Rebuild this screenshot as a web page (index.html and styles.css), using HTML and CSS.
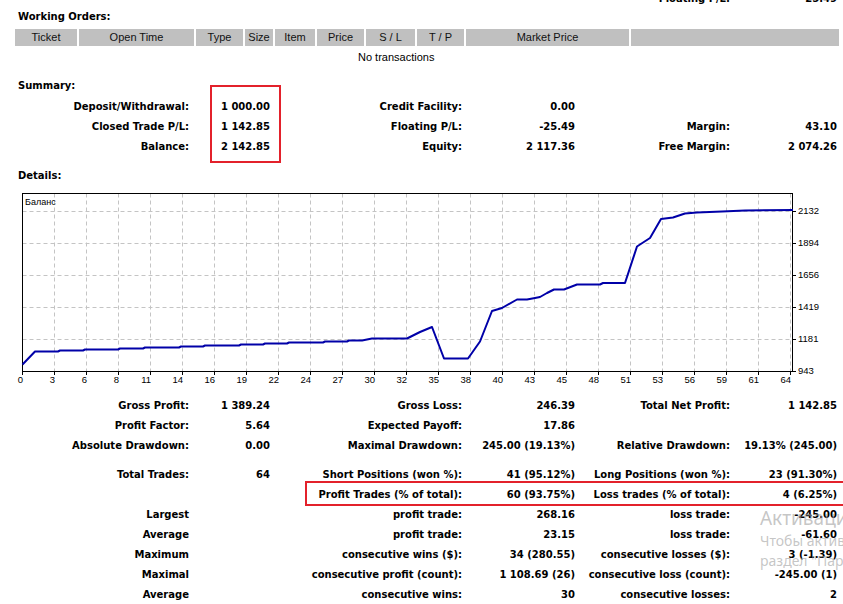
FILE: index.html
```html
<!DOCTYPE html>
<html>
<head>
<meta charset="utf-8">
<link rel="stylesheet" href="styles.css">
</head>
<body>
<div class="page">
  <div class="grid6 cut-row">
    <span class="c5">Floating P/L:</span><span>-25.49</span>
  </div>

  <div class="heading wo">Working Orders:</div>
  <div class="orders-head">
    <span>Ticket</span><span>Open Time</span><span>Type</span><span>Size</span><span>Item</span><span>Price</span><span>S / L</span><span>T / P</span><span>Market Price</span><span></span>
  </div>
  <div class="no-trans">No transactions</div>

  <div class="heading sum">Summary:</div>
  <div class="grid6 summary">
    <span>Deposit/Withdrawal:</span><span>1 000.00</span><span>Credit Facility:</span><span>0.00</span><span></span><span></span>
    <span>Closed Trade P/L:</span><span>1 142.85</span><span>Floating P/L:</span><span>-25.49</span><span>Margin:</span><span>43.10</span>
    <span>Balance:</span><span>2 142.85</span><span>Equity:</span><span>2 117.36</span><span>Free Margin:</span><span>2 074.26</span>
    <div class="mark mark-sum"></div>
  </div>

  <div class="heading det">Details:</div>
  <svg class="chart" width="843" height="209" viewBox="0 186 843 209" xmlns="http://www.w3.org/2000/svg">
    <rect x="22.5" y="193.5" width="770" height="178" fill="#fff" stroke="none"/>
    <path d="M22.5 211.5H792.5M22.5 243.5H792.5M22.5 275.5H792.5M22.5 307.5H792.5M22.5 339.5H792.5" stroke="#c4c4c4" stroke-width="1" stroke-dasharray="4 3" fill="none"/>
    <path d="M54.5 193.5V371.5M86.5 193.5V371.5M118.5 193.5V371.5M150.5 193.5V371.5M182.5 193.5V371.5M214.5 193.5V371.5M246.5 193.5V371.5M278.5 193.5V371.5M310.5 193.5V371.5M342.5 193.5V371.5M374.5 193.5V371.5M406.5 193.5V371.5M438.5 193.5V371.5M470.5 193.5V371.5M502.5 193.5V371.5M534.5 193.5V371.5M566.5 193.5V371.5M598.5 193.5V371.5M630.5 193.5V371.5M662.5 193.5V371.5M694.5 193.5V371.5M726.5 193.5V371.5M758.5 193.5V371.5M790.5 193.5V371.5" stroke="#c4c4c4" stroke-width="1" stroke-dasharray="4 3" fill="none"/>
    <rect x="22.5" y="193.5" width="770" height="178" fill="none" stroke="#000" stroke-width="1"/>
    <path d="M792.5 211.5H796M792.5 243.5H796M792.5 275.5H796M792.5 307.5H796M792.5 339.5H796M792.5 371.5H796" stroke="#000" stroke-width="1"/>
    <path d="M22.5 371.5V375M54.5 371.5V375M86.5 371.5V375M118.5 371.5V375M150.5 371.5V375M182.5 371.5V375M214.5 371.5V375M246.5 371.5V375M278.5 371.5V375M310.5 371.5V375M342.5 371.5V375M374.5 371.5V375M406.5 371.5V375M438.5 371.5V375M470.5 371.5V375M502.5 371.5V375M534.5 371.5V375M566.5 371.5V375M598.5 371.5V375M630.5 371.5V375M662.5 371.5V375M694.5 371.5V375M726.5 371.5V375M758.5 371.5V375M790.5 371.5V375" stroke="#000" stroke-width="1"/>
    <polyline fill="none" stroke="#0000a8" stroke-width="2" stroke-linejoin="round" points="22.5,364.5 35,351.5 58,351.5 60,350.5 83,350.5 85,349.5 118,349.5 120,348.5 143,348.5 145,347.5 179,347.5 181,346.5 203,346.5 205,345.5 239,345.5 241,344.5 263,344.5 265,343.5 287,343.5 289,342.5 323,342.5 325,341.5 347,341.5 349,340.5 362,340.5 372,338.5 407,338.5 420,332 432,327 444,358.5 468,358.5 480,341.5 492,311 502,308 517,299.5 527,299.5 535,298 540,297 547,293 554,289.5 564,289.5 577,284.5 600,284.5 603,283 625,283 637,246.5 640,244.5 650,238 661,219 673,217.5 685,213.5 697,212.5 722,211.5 745,210.5 793,210"/>
    <text class="cap" x="25" y="205">Баланс</text>
    <g class="ylab">
      <text x="798" y="214">2132</text>
      <text x="798" y="246">1894</text>
      <text x="798" y="278">1656</text>
      <text x="798" y="310">1419</text>
      <text x="798" y="342">1181</text>
      <text x="798" y="374">943</text>
    </g>
    <g class="xlab">
      <text x="23" y="383" text-anchor="start">0</text>
      <text x="55" y="383">3</text>
      <text x="87" y="383">6</text>
      <text x="119" y="383">8</text>
      <text x="151" y="383">11</text>
      <text x="183" y="383">14</text>
      <text x="215" y="383">16</text>
      <text x="247" y="383">19</text>
      <text x="279" y="383">22</text>
      <text x="311" y="383">24</text>
      <text x="343" y="383">27</text>
      <text x="375" y="383">30</text>
      <text x="407" y="383">32</text>
      <text x="439" y="383">35</text>
      <text x="471" y="383">38</text>
      <text x="503" y="383">40</text>
      <text x="535" y="383">43</text>
      <text x="567" y="383">45</text>
      <text x="599" y="383">48</text>
      <text x="631" y="383">51</text>
      <text x="663" y="383">53</text>
      <text x="695" y="383">56</text>
      <text x="727" y="383">59</text>
      <text x="759" y="383">61</text>
      <text x="791" y="383">64</text>
    </g>
  </svg>

  <div class="grid6 stats-a">
    <span>Gross Profit:</span><span>1 389.24</span><span>Gross Loss:</span><span>246.39</span><span>Total Net Profit:</span><span>1 142.85</span>
    <span>Profit Factor:</span><span>5.64</span><span>Expected Payoff:</span><span>17.86</span><span></span><span></span>
    <span>Absolute Drawdown:</span><span>0.00</span><span>Maximal Drawdown:</span><span>245.00 (19.13%)</span><span>Relative Drawdown:</span><span>19.13% (245.00)</span>
  </div>

  <div class="grid6 stats-b">
    <span>Total Trades:</span><span>64</span><span>Short Positions (won %):</span><span>41 (95.12%)</span><span>Long Positions (won %):</span><span>23 (91.30%)</span>
    <span></span><span></span><span>Profit Trades (% of total):</span><span>60 (93.75%)</span><span>Loss trades (% of total):</span><span>4 (6.25%)</span>
    <span>Largest</span><span></span><span>profit trade:</span><span>268.16</span><span>loss trade:</span><span>-245.00</span>
    <span>Average</span><span></span><span>profit trade:</span><span>23.15</span><span>loss trade:</span><span>-61.60</span>
    <span>Maximum</span><span></span><span>consecutive wins ($):</span><span>34 (280.55)</span><span>consecutive losses ($):</span><span>3 (-1.39)</span>
    <span>Maximal</span><span></span><span>consecutive profit (count):</span><span>1 108.69 (26)</span><span>consecutive loss (count):</span><span>-245.00 (1)</span>
    <span>Average</span><span></span><span>consecutive wins:</span><span>30</span><span>consecutive losses:</span><span>2</span>
    <div class="mark mark-trades"></div>
  </div>

  <div class="watermark">
    <div class="wm1">Активация Windows</div>
    <div class="wm2">Чтобы активировать Windows, перейдите в</div>
    <div class="wm2">раздел "Параметры".</div>
  </div>
</div>
</body>
</html>
```

FILE: styles.css
```css
html, body {
  margin: 0;
  padding: 0;
  background: #fff;
}
body {
  width: 843px;
  height: 604px;
  overflow: hidden;
  font-family: "DejaVu Sans", "Liberation Sans", sans-serif;
  font-size: 10px;
  font-weight: bold;
  color: #000;
}
.page {
  position: relative;
  width: 843px;
  height: 604px;
  overflow: hidden;
}
.grid6 {
  display: grid;
  grid-template-columns: 189px 81px 192px 113px 155px 107px;
  grid-auto-rows: 20px;
  align-items: center;
  text-align: right;
  white-space: nowrap;
}
.cut-row {
  margin-top: -12px;
}
.c5 {
  grid-column: 5;
}
.heading {
  height: 20px;
  line-height: 20px;
  padding-left: 18px;
}
.wo {
  margin-top: -1px;
}
.orders-head {
  margin-top: 2px;
  margin-left: 15px;
  display: grid;
  grid-template-columns: 62px 115px 47px 28px 40px 47px 49px 47px 163px 208px;
  column-gap: 2px;
  height: 17px;
}
.orders-head span {
  background: #c0c0c0;
  font-family: "Liberation Sans", sans-serif;
  font-weight: normal;
  font-size: 11px;
  line-height: 17px;
  text-align: center;
  color: #111;
}
.no-trans {
  height: 20px;
  line-height: 20px;
  font-family: "Liberation Sans", sans-serif;
  font-weight: normal;
  font-size: 11px;
  padding-left: 358px;
  margin-top: 1px;
}
.sum {
  margin-top: 9px;
}
.summary {
  position: relative;
}
.det {
  margin-top: 10px;
}
.chart {
  display: block;
}
.chart text {
  font-family: "Liberation Sans", sans-serif;
  font-weight: normal;
  font-size: 9.5px;
  fill: #000;
}
.chart .xlab text {
  text-anchor: end;
}
.chart .cap {
  font-size: 9px;
}
.stats-b {
  position: relative;
  margin-top: 9px;
}
.mark {
  position: absolute;
  border: 2px solid #e3212b;
  box-sizing: border-box;
}
.mark-sum {
  left: 210px;
  top: -11px;
  width: 71px;
  height: 78px;
}
.mark-trades {
  left: 305px;
  top: 17px;
  width: 600px;
  height: 25px;
}
.watermark {
  position: absolute;
  left: 760px;
  top: 506px;
  color: rgba(160, 160, 160, 0.6);
  font-family: "Noto Sans", "Open Sans", sans-serif;
  font-weight: normal;
  white-space: nowrap;
}
.wm1 {
  font-size: 19px;
  line-height: 25px;
}
.wm2 {
  font-size: 14px;
  line-height: 20px;
}
```
